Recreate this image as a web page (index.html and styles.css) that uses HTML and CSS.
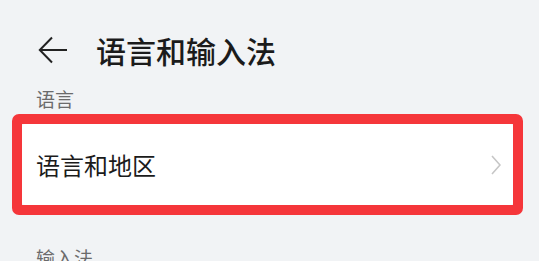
FILE: index.html
```html
<!DOCTYPE html>
<html>
<head>
	<meta charset="utf-8">
	<title>语言和输入法</title>
	<link rel="stylesheet" href="styles.css">
</head>
<body>
	<div class="header">
		<svg class="back" width="30" height="28" viewBox="0 0 30 28">
			<path d="M29 14H2M14 1.5L1.8 14L14 26.5" fill="none" stroke="#222" stroke-width="2"/>
		</svg>
		<h1>语言和输入法</h1>
	</div>
	<div class="section-label">语言</div>
	<div class="highlight">
		<div class="card">
			<span class="item-name">语言和地区</span>
			<svg class="chevron" width="10" height="20" viewBox="0 0 10 20">
				<polyline points="1,1 9,10 1,19" fill="none" stroke="#c6c6c6" stroke-width="1.6"/>
			</svg>
		</div>
	</div>
	<div class="section-label second">输入法</div>
</body>
</html>
```

FILE: styles.css
```css
body {
	background-color: #f1f3f5;
	font-family: "Noto Sans CJK SC", "Noto Sans", sans-serif;
	margin: 0;
	padding: 0;
	overflow: hidden;
}
.header {
	display: flex;
	align-items: center;
	height: 60px;
	margin-top: 20px;
	padding-left: 38px;
}
.header .back {
	display: block;
}
.header h1 {
	color: #1b1b1b;
	font-size: 30px;
	font-weight: 500;
	line-height: 40px;
	margin: 0 0 0 28px;
}
.section-label {
	color: #6b6b6b;
	font-size: 19px;
	line-height: 26px;
	margin-top: 6px;
	padding-left: 36px;
}
.section-label.second {
	margin-top: 30px;
}
.highlight {
	border: 10px solid #f5363a;
	border-radius: 7px;
	margin: 2px 16px 0 12px;
}
.card {
	align-items: center;
	background-color: #fff;
	border-radius: 3px;
	display: flex;
	height: 81px;
	justify-content: space-between;
	padding: 0 12px 0 14px;
}
.item-name {
	color: #1b1b1b;
	font-size: 24px;
}
.chevron {
	display: block;
}
```
